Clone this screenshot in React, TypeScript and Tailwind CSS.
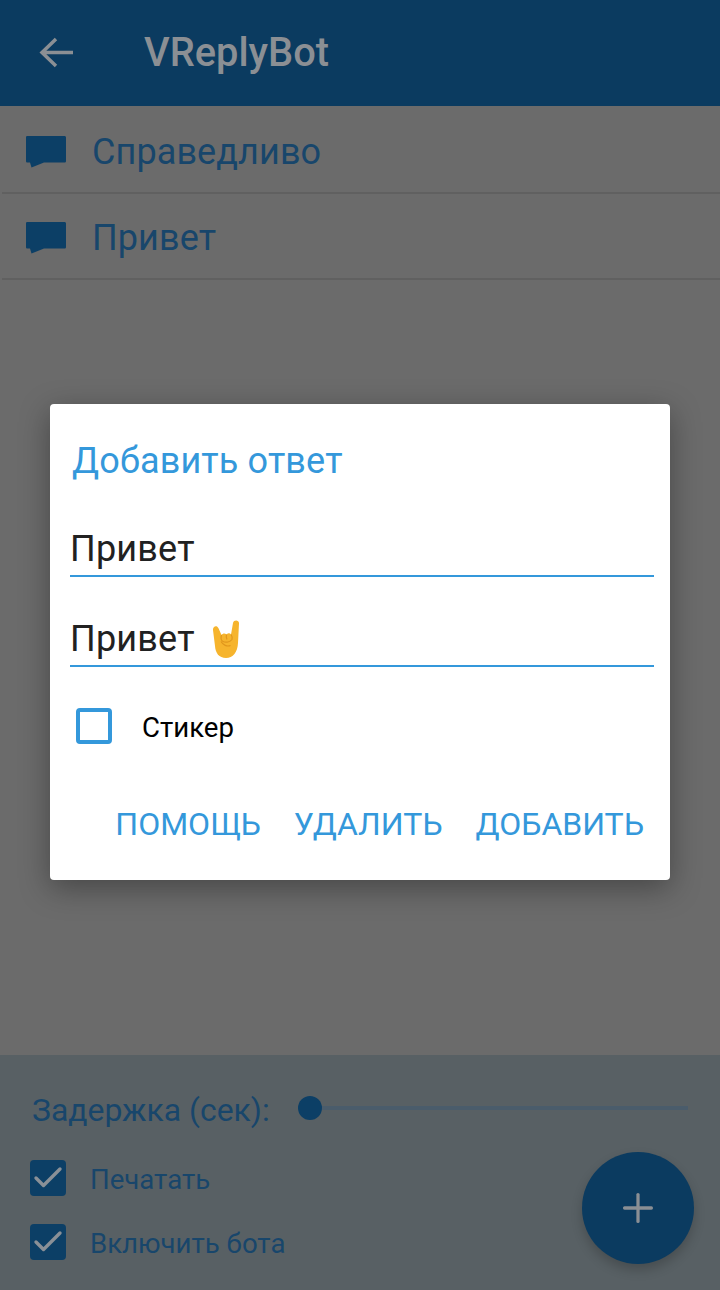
import { Check, Plus } from "lucide-react";

function ChatIcon() {
  return (
    <svg width="42" height="34" viewBox="0 0 42 34" className="shrink-0">
      <path d="M1 2.5C1 1.4 1.6 1 2.5 1H39.5C40.4 1 41 1.6 41 2.5V26C41 27 40.4 27.6 39.5 27.6H19L6.5 32.5L5 27.6H2.5C1.6 27.6 1 27 1 26Z" fill="#0c3f66" />
    </svg>
  );
}

function ReplyRow({ text }: { text: string }) {
  return (
    <div className="ml-[2px] flex h-[86px] items-center gap-[25px] border-b-2 border-[#606060] pl-[23px] pt-[4px]">
      <ChatIcon />
      <span className="text-[36px] tracking-[0.1px] text-[#18466b]">{text}</span>
    </div>
  );
}

function BlueCheck({ label }: { label: string }) {
  return (
    <div className="flex items-center gap-[24px]">
      <div className="flex h-[36px] w-[36px] items-center justify-center rounded-[4px] bg-[#0c3f66]">
        <Check size={36} strokeWidth={2.25} className="text-[#8a9097]" />
      </div>
      <span className="pt-[4px] text-[27.6px] leading-[32px] text-[#18466b]">{label}</span>
    </div>
  );
}

function HornsEmoji() {
  return (
    <svg width="28" height="38" viewBox="0 0 28 38" className="ml-[17px] shrink-0">
      <path d="M1 10C0.6 6 5 4.6 6.5 8.2L9.5 15C11 13 13 13 14.5 14.5C16 12.8 18 13 19 14.5L21 3C21.6-0.6 27.4-0.2 27 3.6L26 23C25.6 32 21 38 14 38C7 38 3.4 33 3 26Z" fill="#f6b42d" />
      <path d="M9.5 15C8.6 18 9 20.5 11 21.5C14 23 18 22 20 19.5C20.6 18 20 16 19 14.5M14.5 14.5C14 16.5 14.2 18 15 19.5M9 21.5C11 25 15 27 18.5 25.5" stroke="#e0961c" strokeWidth="1.2" fill="none" />
    </svg>
  );
}

export default function App() {
  return (
    <div className="relative flex h-[1290px] w-[720px] flex-col overflow-hidden bg-[#6b6b6b] font-['Roboto',sans-serif]">
      <header className="flex h-[106px] shrink-0 items-center bg-[#0b3b60] pl-[39px]">
        <svg width="34" height="32" viewBox="0 0 34 32" className="shrink-0">
          <path d="M34 15.5H4M17 2L3 15.5L17 29" stroke="#8b8f94" strokeWidth="3.5" fill="none" />
        </svg>
        <h1 className="ml-[71px] text-[39.8px] font-medium text-[#8b8f94]">VReplyBot</h1>
      </header>

      <div className="flex-1 pt-[2px]">
        <ReplyRow text="Справедливо" />
        <ReplyRow text="Привет" />
      </div>

      <div className="flex h-[235px] shrink-0 flex-col bg-[#586064] pl-[30px] pt-[32px]">
        <div className="flex items-center">
          <span className="ml-[2px] text-[31.9px] text-[#18466b]">Задержка (сек):</span>
          <div className="mb-[6px] ml-[28px] flex flex-1 items-center pr-[32px]">
            <div className="h-[24px] w-[24px] shrink-0 rounded-full bg-[#0c3f66]" />
            <div className="h-[4px] flex-1 bg-[#4a5c6b]" />
          </div>
        </div>
        <div className="mt-[25px] flex flex-col gap-[28px]">
          <BlueCheck label="Печатать" />
          <BlueCheck label="Включить бота" />
        </div>
      </div>

      <div className="absolute left-[582px] top-[1152px] flex h-[112px] w-[112px] items-center justify-center rounded-full bg-[#0b3b60] shadow-[0_6px_12px_rgba(0,0,0,0.2)]">
        <Plus size={46} strokeWidth={1.7} className="text-[#8b8f94]" />
      </div>

      <div className="absolute left-[50px] top-[404px] flex h-[476px] w-[620px] flex-col rounded-[4px] bg-white shadow-[0_8px_30px_rgba(0,0,0,0.35)]">
        <h2 className="ml-[22px] mt-[32px] text-[36px] leading-[50px] tracking-[0.15px] text-[#3498db]">Добавить ответ</h2>
        <div className="ml-[20px] mr-[16px] mt-[35px] flex h-[56px] items-center border-b-2 border-[#3498db] pt-[2px] text-[36px] tracking-[0.2px] text-[#212121]">
          Привет
        </div>
        <div className="ml-[20px] mr-[16px] mt-[34px] flex h-[56px] items-center border-b-2 border-[#3498db] pt-[2px] text-[36px] tracking-[0.2px] text-[#212121]">
          Привет
          <HornsEmoji />
        </div>
        <div className="ml-[26px] mt-[41px] flex items-center gap-[30px]">
          <div className="h-[36px] w-[36px] rounded-[4px] border-[4px] border-[#3498db]" />
          <span className="pt-[4px] text-[27.6px] leading-[32px] text-black">Стикер</span>
        </div>
        <div className="mt-[56px] flex justify-end gap-[33px] pr-[26px] text-[32px] leading-[48px] text-[#3498db]">
          <span>ПОМОЩЬ</span>
          <span>УДАЛИТЬ</span>
          <span>ДОБАВИТЬ</span>
        </div>
      </div>
    </div>
  );
}
